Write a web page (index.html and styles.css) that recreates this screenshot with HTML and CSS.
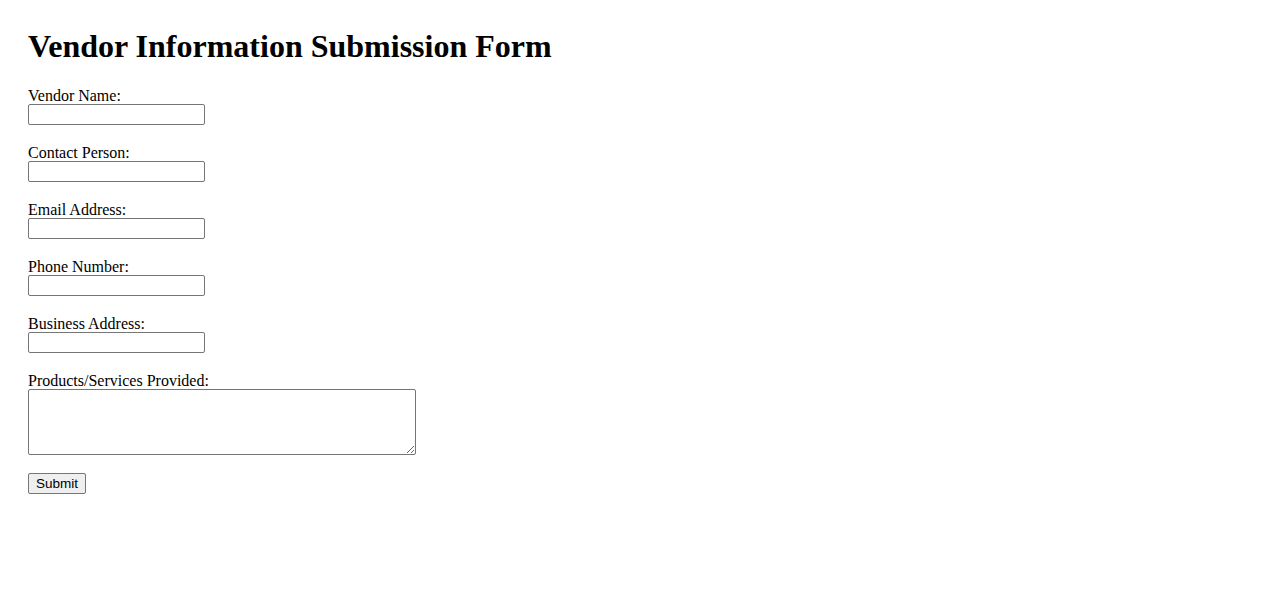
FILE: index.html
```html
<!DOCTYPE html>
<html lang="en">
<head>
<meta charset="utf-8">
<title>Vendor Information Submission Form</title>
<link rel="stylesheet" href="styles.css">
</head>
<body>
<h1 class="title">Vendor Information Submission Form</h1>
<form class="form">
  <div class="field">
    <label class="label" for="vname">Vendor Name:</label>
    <input class="input" type="text" id="vname">
  </div>
  <div class="field">
    <label class="label" for="cperson">Contact Person:</label>
    <input class="input" type="text" id="cperson">
  </div>
  <div class="field">
    <label class="label" for="email">Email Address:</label>
    <input class="input" type="email" id="email">
  </div>
  <div class="field">
    <label class="label" for="phone">Phone Number:</label>
    <input class="input" type="tel" id="phone">
  </div>
  <div class="field">
    <label class="label" for="addr">Business Address:</label>
    <input class="input" type="text" id="addr">
  </div>
  <div class="field">
    <label class="label" for="products">Products/Services Provided:</label>
    <textarea class="textarea" id="products"></textarea>
  </div>
  <div class="field">
    <button class="submit" type="submit">Submit</button>
  </div>
</form>
</body>
</html>
```
FILE: styles.css
```css
html, body {
  background: #ffffff;
}
body {
  margin: 0;
  padding: 28px;
  font-family: "Liberation Serif", "Times New Roman", serif;
  font-size: 16px;
  color: #000000;
}
.title {
  margin: 0 0 21px;
  font-size: 32px;
  font-weight: bold;
  line-height: 37px;
}
.form {
  display: flex;
  flex-direction: column;
  gap: 18px;
  align-items: flex-start;
}
.field {
  display: flex;
  flex-direction: column;
  align-items: flex-start;
}
.label {
  display: block;
  box-sizing: border-box;
  height: 18px;
  padding-top: 1px;
  line-height: 18px;
}
.input {
  box-sizing: border-box;
  width: 177px;
  height: 21px;
  margin: 0;
  padding: 1px 2px;
  border: 1px solid #767676;
  border-radius: 2px;
  background: #ffffff;
  font-family: "Liberation Sans", Arial, sans-serif;
  font-size: 13.33px;
}
.textarea {
  box-sizing: border-box;
  width: 388px;
  height: 66px;
  margin: 0;
  padding: 2px;
  border: 1px solid #767676;
  border-radius: 2px;
  background: #ffffff;
  font-family: "Liberation Mono", monospace;
  font-size: 13.33px;
  resize: both;
}
.submit {
  box-sizing: border-box;
  width: 58px;
  height: 21px;
  margin: 0;
  padding: 1px 6px;
  border: 1px solid #767676;
  border-radius: 2px;
  background: #efefef;
  color: #000000;
  font-family: "Liberation Sans", Arial, sans-serif;
  font-size: 13.5px;
  line-height: 17px;
}
```
